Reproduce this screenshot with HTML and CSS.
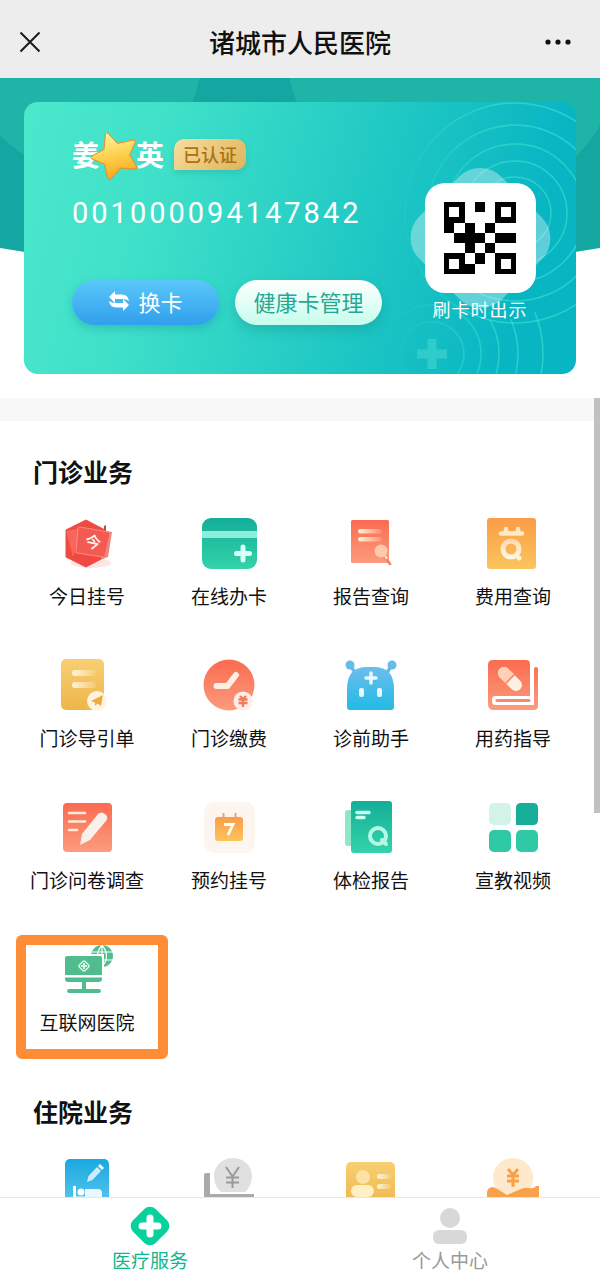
FILE: index.html
```html
<!DOCTYPE html>
<html lang="zh-CN">
<head>
    <meta charset="UTF-8">
    <meta name="viewport" content="width=device-width, initial-scale=1.0">
    <title>诸城市人民医院</title>
    <link rel="stylesheet" href="styles.css">
</head>
<body>
    <!-- shared gradients -->
    <svg class="defs" aria-hidden="true">
        <defs>
            <linearGradient id="green" x1="0" y1="0" x2="0" y2="1"><stop offset="0" stop-color="#14ae99"/><stop offset="1" stop-color="#34d3a9"/></linearGradient>
            <linearGradient id="red" x1="0" y1="0" x2="0" y2="1"><stop offset="0" stop-color="#fb6b50"/><stop offset="1" stop-color="#fb9c7d"/></linearGradient>
            <linearGradient id="orange" x1="0" y1="0" x2="0" y2="1"><stop offset="0" stop-color="#fb9c48"/><stop offset="1" stop-color="#fbc55c"/></linearGradient>
            <linearGradient id="yellow" x1="0" y1="0" x2="0" y2="1"><stop offset="0" stop-color="#f8cf72"/><stop offset="1" stop-color="#eeb54a"/></linearGradient>
            <linearGradient id="blue" x1="0" y1="0" x2="0" y2="1"><stop offset="0" stop-color="#6cbdec"/><stop offset="1" stop-color="#21bbe5"/></linearGradient>
            <linearGradient id="sky" x1="0" y1="0" x2="0" y2="1"><stop offset="0" stop-color="#18a9e0"/><stop offset="1" stop-color="#62c8ef"/></linearGradient>
            <linearGradient id="fade" x1="0" y1="0" x2="1" y2="0"><stop offset="0" stop-color="#fff3d8"/><stop offset="1" stop-color="#fff3d8" stop-opacity="0.15"/></linearGradient>
            <linearGradient id="pale" x1="0" y1="0" x2="0" y2="1"><stop offset="0" stop-color="#ffdcb0"/><stop offset="1" stop-color="#fff6e6"/></linearGradient>
            <linearGradient id="star" x1="0.4" y1="0" x2="0.6" y2="1"><stop offset="0" stop-color="#fff3a0"/><stop offset="0.5" stop-color="#fdcf4b"/><stop offset="1" stop-color="#f8a51e"/></linearGradient>
            <linearGradient id="ring" gradientUnits="userSpaceOnUse" x1="10" y1="0" x2="120" y2="0"><stop offset="0" stop-color="#3fe0d0" stop-opacity="0"/><stop offset="1" stop-color="#3fe0d0" stop-opacity="0.6"/></linearGradient>
        </defs>
    </svg>

    <header class="navbar">
        <button class="nav_btn" type="button" aria-label="关闭">
            <svg width="22" height="22" viewBox="0 0 22 22"><path d="M1.5 1.5L20.5 20.5M20.5 1.5L1.5 20.5" stroke="#1a1a1a" stroke-width="2"/></svg>
        </button>
        <h1>诸城市人民医院</h1>
        <button class="nav_btn" type="button" aria-label="更多">
            <svg width="28" height="8" viewBox="0 0 28 8" fill="#111"><circle cx="4" cy="4" r="2.6"/><circle cx="14" cy="4" r="2.6"/><circle cx="24" cy="4" r="2.6"/></svg>
        </button>
    </header>

    <section class="hero">
        <svg class="hero_bg" viewBox="0 0 600 190" preserveAspectRatio="none" aria-hidden="true">
            <clipPath id="curve"><path d="M0 0H600V170Q300 220 0 170Z"/></clipPath>
            <g clip-path="url(#curve)">
                <rect width="600" height="200" fill="#14a7a1"/>
                <circle cx="85" cy="-23" r="117" fill="#1fb4a8"/>
                <circle cx="454" cy="-38" r="169" fill="#1fb4a8"/>
            </g>
        </svg>
        <div class="card">
            <svg class="card_rings" viewBox="0 0 200 272" fill="none" stroke="url(#ring)" stroke-width="1.5" aria-hidden="true">
                <clipPath id="below"><path d="M0 190L60 200Q139 245 200 180V272H0Z"/></clipPath>
                <circle cx="139" cy="111" r="36"/><circle cx="139" cy="111" r="52"/><circle cx="139" cy="111" r="69"/><circle cx="139" cy="111" r="88"/><circle cx="139" cy="111" r="110"/>
                <g clip-path="url(#below)">
                    <circle cx="56" cy="252" r="32"/><circle cx="56" cy="252" r="49"/><circle cx="56" cy="252" r="67"/><circle cx="56" cy="252" r="86"/><circle cx="56" cy="252" r="111"/>
                </g>
                <path d="M56 237V267M41 252H71" stroke="#2fccca" stroke-width="9"/>
            </svg>
            <div class="card_info">
                <div class="person">
                    <p class="name">
                        <span>姜</span>
                        <svg class="star" viewBox="0 0 50 50" aria-hidden="true"><path d="M16.5 2.5Q17.5 1 19 2.5L28.5 12.5L44 9Q47 9 46 12L40.5 24L47.5 35Q48.5 38 45 38L31.5 37L22 48Q19.5 50 18.5 46.5L15.5 33L3 28Q.5 26.5 3 25L15 18.5Z" fill="url(#star)" stroke="#f08a22"/></svg>
                        <span>英</span>
                    </p>
                    <span class="verified">已认证</span>
                </div>
                <p class="card_no">001000094147842</p>
                <div class="card_actions">
                    <button class="pill pill_blue" type="button">
                        <svg width="22" height="20" viewBox="0 0 22 20" fill="#fff" aria-hidden="true"><path d="M1 6L7 0V3.500H14Q20 3.500 21 10Q18.500 8 14 8H7V12Z"/><path d="M21 14L15 20V16.500H8Q2 16.500 1 10Q3.500 12 8 12H15V8Z"/></svg>
                        换卡
                    </button>
                    <button class="pill pill_white" type="button">健康卡管理</button>
                </div>
            </div>
            <div class="qr">
                <div class="qr_box">
                    <svg width="72" height="72" viewBox="0 0 14 14" shape-rendering="crispEdges" role="img" aria-label="二维码">
                        <path fill-rule="evenodd" d="M0 0H4V4H0ZM1 1V3H3V1ZM10 0H14V4H10ZM11 1V3H13V1ZM0 10H4V14H0ZM1 11V13H3V11ZM10 10H14V14H10ZM11 11V13H13V11Z"/>
                        <path d="M6 0H8V2H6ZM0 4H2V6H0ZM4 4H6V6H4ZM8 4H10V6H8ZM2 6H8V8H2ZM10 6H14V8H10ZM4 8H6V10H4ZM8 8H10V10H8ZM6 10H8V12H6ZM4 12H6V14H4Z"/>
                    </svg>
                </div>
                <p>刷卡时出示</p>
            </div>
        </div>
    </section>

    <div class="scroll_wrap">
        <main class="content">
            <section class="services">
                <h2>门诊业务</h2>
                <div class="grid">
                    <a class="item" href="#">
                        <svg viewBox="0 0 56 56" aria-hidden="true"><ellipse cx="32" cy="47" rx="20" ry="5" fill="#fde5e2"/><path d="M27 4L46 14V41L27 51L7 41V14Z" fill="#ef4a42" stroke="#ef4a42" stroke-linejoin="round"/><path d="M7 15L24 12L14 41Z" fill="#fb7a6c" opacity="0.6"/><path d="M26 13L53 16L49 41L43 43Z" fill="#e98578"/><path d="M45 15V10L47 9V15Z" fill="#c9453c"/><path d="M21 11L50 16Q51 16 51 18L46 40Q46 42 44 41L18 37Q16 37 17 35L19 12Q19 11 21 11Z" fill="#f35b52" stroke="#fa8b80"/><text class="icon_text" x="34" y="32" font-size="16" transform="rotate(12 34 26)" text-anchor="middle" fill="#fff">今</text></svg>
                        <span>今日挂号</span>
                    </a>
                    <a class="item" href="#">
                        <svg viewBox="0 0 56 56" aria-hidden="true"><rect x="1" y="2" width="55" height="51" rx="9" fill="url(#green)"/><path d="M1 15H56V22H1Z" fill="#8ceed8"/><path d="M42 31V44M35.5 37.5H48.5" stroke="#d9fff8" stroke-width="5" stroke-linecap="round"/></svg>
                        <span>在线办卡</span>
                    </a>
                    <a class="item" href="#">
                        <svg viewBox="0 0 56 56" aria-hidden="true"><rect x="8" y="4" width="38" height="43" rx="1.5" fill="url(#red)"/><rect x="15" y="13" width="24" height="4.5" rx="2.2" fill="url(#fade)"/><rect x="15" y="21" width="24" height="4.5" rx="2.2" fill="url(#fade)"/><path d="M42 41L47 48" stroke="#ee8067" stroke-width="2.5" stroke-linecap="round"/><circle cx="38" cy="35" r="6.5" fill="#ffc9a8"/><path d="M42 40L44 43" stroke="#ffe2cc" stroke-width="2"/></svg>
                        <span>报告查询</span>
                    </a>
                    <a class="item" href="#">
                        <svg viewBox="0 0 56 56" aria-hidden="true"><rect x="2" y="2" width="49" height="51" rx="3" fill="url(#orange)"/><path d="M16 17.5H37M21 13V17M33 13V17" stroke="#ffe9c6" stroke-width="4.5" stroke-linecap="round"/><circle cx="26" cy="33" r="8" fill="none" stroke="url(#pale)" stroke-width="5"/><circle cx="34" cy="42" r="2.5" fill="#fff2dc"/></svg>
                        <span>费用查询</span>
                    </a>
                    <a class="item" href="#">
                        <svg viewBox="0 0 56 56" aria-hidden="true"><rect x="2" y="1" width="43" height="51" rx="5" fill="url(#yellow)"/><rect x="13" y="12" width="24" height="6" rx="3" fill="url(#fade)"/><rect x="13" y="24" width="24" height="6" rx="3" fill="url(#fade)"/><circle cx="38" cy="43" r="10" fill="#fff3df"/><path d="M32 43L44 37L42 48L38.5 45.5L36 48V44.5Z" fill="#efab3b"/></svg>
                        <span>门诊导引单</span>
                    </a>
                    <a class="item" href="#">
                        <svg viewBox="0 0 56 56" aria-hidden="true"><circle cx="28" cy="27" r="25.5" fill="url(#red)"/><path d="M15.5 28H26.5L35 17" fill="none" stroke="#fff0e6" stroke-width="6" stroke-linecap="round" stroke-linejoin="round"/><circle cx="42" cy="43" r="9.5" fill="#fdeee6"/><path d="M39 38L42 41L45 38M37.5 41.5H46.5M37.5 45H46.5M42 41V49" stroke="#f3785f" stroke-width="2.3" fill="none"/></svg>
                        <span>门诊缴费</span>
                    </a>
                    <a class="item" href="#">
                        <svg viewBox="0 0 56 56" aria-hidden="true"><path d="M7 7L13 16M49 7L43 16" stroke="#67bbea" stroke-width="3.5"/><circle cx="7" cy="7" r="4.5" fill="#67bbea"/><circle cx="49" cy="7" r="4.5" fill="#67bbea"/><path d="M4 31Q4 9 24 9H31Q51 9 51 31V49Q51 52 48 52H7Q4 52 4 49Z" fill="url(#blue)"/><path d="M28 15V25M23 20H33" stroke="#e6f7ff" stroke-width="3.5" stroke-linecap="round"/><rect x="16" y="30" width="5" height="9" rx="2" fill="#e6f7ff"/><rect x="34" y="30" width="5" height="9" rx="2" fill="#e6f7ff"/></svg>
                        <span>诊前助手</span>
                    </a>
                    <a class="item" href="#">
                        <svg viewBox="0 0 56 56" aria-hidden="true"><path d="M8 2H41Q45 2 45 6V38H10Q7 38 7 42.5Q7 47 10 47H49V11Q49 9 51 9Q53 9 53 11V48Q53 52 49 52H9Q3 52 3 46V7Q3 2 8 2Z" fill="url(#red)"/><path d="M12 42.5H44" stroke="#f58b6c" stroke-width="3" stroke-linecap="round"/><g transform="rotate(45 25 21)"><rect x="10.5" y="15" width="29" height="12" rx="6" fill="#fff0e6"/><path d="M16.5 15H24.5V27H16.5A6 6 0 0 1 16.5 15" fill="#ffd0b6"/><path d="M25 15V27" stroke="#f5795c" stroke-width="1.5"/></g></svg>
                        <span>用药指导</span>
                    </a>
                    <a class="item" href="#">
                        <svg viewBox="0 0 56 56" aria-hidden="true"><rect x="4" y="3" width="49" height="49" rx="4" fill="url(#red)"/><path d="M10 13H26M10 21.5H26M10 30H18" stroke="#ffeadd" stroke-width="2.5" stroke-linecap="round"/><path d="M21 45L23 34L39 14Q42 11 46 14Q50 17 47 21L31 40Z" fill="#f8f1ea"/></svg>
                        <span>门诊问卷调查</span>
                    </a>
                    <a class="item" href="#">
                        <svg viewBox="0 0 56 56" aria-hidden="true"><rect x="3" y="2" width="51" height="51" rx="10" fill="#fdf5ef"/><rect x="14" y="17" width="28" height="24" rx="3" fill="url(#orange)"/><path d="M22.5 13V20M34.5 13V20" stroke="#f7a05a" stroke-width="2"/><path d="M23 24.5H32L27 35" fill="none" stroke="#fff" stroke-width="2.8"/></svg>
                        <span>预约挂号</span>
                    </a>
                    <a class="item" href="#">
                        <svg viewBox="0 0 56 56" aria-hidden="true"><rect x="2" y="10" width="14" height="36" rx="3" fill="#8fe6cb"/><rect x="8" y="1" width="41" height="52" rx="3" fill="url(#green)"/><path d="M14 12.5H26M14 17.5H21" stroke="#c9fff0" stroke-width="3.5" stroke-linecap="round"/><circle cx="35" cy="36" r="8" fill="none" stroke="#b5f7e5" stroke-width="4"/><path d="M39 40L43 44" stroke="#b5f7e5" stroke-width="4" stroke-linecap="round"/></svg>
                        <span>体检报告</span>
                    </a>
                    <a class="item" href="#">
                        <svg viewBox="0 0 56 56" aria-hidden="true"><rect x="4" y="3" width="22" height="22" rx="5" fill="#d3f3e9"/><path d="M36 3H48Q53 3 53 8V20Q53 25 48 25H31V8Q31 3 36 3Z" fill="#16ae99"/><rect x="4" y="30" width="22" height="22" rx="5" fill="#30c9a6"/><rect x="31" y="30" width="22" height="22" rx="5" fill="#30c9a6"/></svg>
                        <span>宣教视频</span>
                    </a>
                    <a class="item marked" href="#">
                        <svg viewBox="0 0 56 56" aria-hidden="true"><circle cx="43" cy="14" r="11" fill="#51bd8f"/><path d="M43 3V25M32 10H54M32 18H54M43 3Q34 14 43 25M43 3Q52 14 43 25" fill="none" stroke="#fff" stroke-width="1.2"/><path d="M4 12H45V42H4Z" fill="#fff"/><path d="M8 14H41Q43 14 43 16V33H6V16Q6 14 8 14ZM6 35.5H43V37Q43 40 40 40H27V47H40Q42 47 42 49T40 51H10Q8 51 8 49T10 47H23V40H9Q6 40 6 37Z" fill="#51bd8f"/><rect x="21" y="20" width="8" height="8" rx="2" transform="rotate(45 25 24)" fill="none" stroke="#d7f7e6" stroke-width="1.5"/><path d="M25 21V27M22 24H28" stroke="#d7f7e6" stroke-width="2"/></svg>
                        <span>互联网医院</span>
                    </a>
                </div>
            </section>

            <section class="services">
                <h2>住院业务</h2>
                <div class="grid">
                    <a class="item" href="#" aria-label="住院登记">
                        <svg viewBox="0 0 56 56" aria-hidden="true"><rect x="6" y="3" width="44" height="50" rx="5" fill="url(#sky)"/><path d="M28 26L29.5 20L38 11L42 15L33.5 24Z" fill="#cbeeff"/><path d="M39 10L41 8L45 12L43 14Z" fill="#fff"/><path d="M15.5 30V46M16 42H42" stroke="#fff" stroke-width="3"/><circle cx="22" cy="36" r="3.5" fill="#fff"/><path d="M26 33H39Q43 33 43 37V43H26Z" fill="#eaf8ff"/></svg>
                    </a>
                    <a class="item" href="#" aria-label="住院预缴">
                        <svg viewBox="0 0 56 56" aria-hidden="true"><path d="M3 19Q3 17 5 17H9V38H53V46H3Z" fill="#aaa"/><path d="M20 36H44Q51 30 51 20A19 18 0 0 0 13 20Q13 30 20 36Z" fill="#e0e0e0"/><path d="M25 11L31.5 20.5L38 11M25 21.5H38M25 26.5H38M31.5 21V32" fill="none" stroke="#999" stroke-width="2"/></svg>
                    </a>
                    <a class="item" href="#" aria-label="住院信息">
                        <svg viewBox="0 0 56 56" aria-hidden="true"><rect x="3" y="6" width="49" height="46" rx="5" fill="url(#yellow)"/><circle cx="20" cy="21" r="7" fill="#fde2a4"/><rect x="8" y="29" width="23" height="12" rx="6" fill="#fff0c4"/><rect x="34" y="18" width="14" height="5" rx="2.5" fill="url(#fade)"/><rect x="34" y="28" width="14" height="5" rx="2.5" fill="url(#fade)"/></svg>
                    </a>
                    <a class="item" href="#" aria-label="住院费用">
                        <svg viewBox="0 0 56 56" aria-hidden="true"><circle cx="28" cy="22" r="20" fill="#ffe9cc"/><path d="M23 13L28 19L33 13M22 20H34M22 25H34M28 19V31" fill="none" stroke="#fba04a" stroke-width="3"/><path d="M2 37Q2 32 7 31Q10 31 14 34L22 39L36 33Q40 31 44 32Q49 33 51 30H54V50H2Z" fill="#fba04a"/></svg>
                    </a>
                </div>
            </section>
        </main>
        <div class="scroll_thumb"></div>
    </div>

    <nav class="tabbar">
        <a class="tab active" href="#">
            <svg viewBox="0 0 40 40" aria-hidden="true"><rect x="4" y="4" width="32" height="32" rx="8" transform="rotate(45 20 20)" fill="#08d19c"/><path d="M20 12V28M12 20H28" stroke="#fff" stroke-width="7" stroke-linecap="round"/></svg>
            <span>医疗服务</span>
        </a>
        <a class="tab" href="#">
            <svg viewBox="0 0 40 40" aria-hidden="true" fill="#d8d8d8"><circle cx="20" cy="12" r="10"/><rect x="3" y="24" width="34" height="14" rx="6"/></svg>
            <span>个人中心</span>
        </a>
    </nav>
</body>
</html>
```

FILE: styles.css
```css
*, *:after, *:before {
    box-sizing: border-box;
}

body {
    font-family: "Noto Sans CJK SC", sans-serif;
    margin: 0;
    height: 100vh;
    display: flex;
    flex-direction: column;
    background: white;
    color: #111;
}

h1, h2, p {
    margin: 0;
}

a {
    color: inherit;
    text-decoration: none;
}

button {
    font-family: inherit;
    border: 0;
    padding: 0;
    cursor: pointer;
}

.defs {
    position: absolute;
    width: 0;
    height: 0;
}

/* top bar */
.navbar {
    display: flex;
    justify-content: space-between;
    align-items: center;
    height: 78px;
    padding: 6px 28px 0 16px;
    background: #ededed;
    flex-shrink: 0;
}

.navbar h1 {
    font-size: 26px;
    font-weight: 500;
    line-height: 36px;
}

.nav_btn {
    display: flex;
    justify-content: center;
    align-items: center;
    width: 28px;
    height: 28px;
    background: none;
}

.nav_btn:first-child {
    margin-right: 12px;
}

/* health card */
.hero {
    position: relative;
    padding: 24px;
    flex-shrink: 0;
}

.hero_bg {
    position: absolute;
    top: 0;
    left: 0;
    width: 100%;
    height: 190px;
}

.card {
    position: relative;
    display: flex;
    justify-content: space-between;
    height: 272px;
    padding: 31px 37px 0 48px;
    border-radius: 14px;
    overflow: hidden;
    background: linear-gradient(105deg, #4be8cc 0%, #3fe0c9 25%, #22cac4 58%, #08b5c3 88%);
}

.card_rings {
    position: absolute;
    top: 0;
    right: 0;
    width: 200px;
    height: 272px;
}

.card_info {
    position: relative;
    color: white;
}

.person {
    display: flex;
    align-items: center;
    gap: 10px;
    height: 42px;
}

.name {
    position: relative;
    display: flex;
    gap: 36px;
    font-size: 28px;
    font-weight: 700;
    line-height: 38px;
}

.star {
    position: absolute;
    top: -4px;
    left: 17px;
    width: 50px;
    height: 50px;
}

.verified {
    height: 31px;
    padding: 0 9px;
    border-radius: 10px 10px 10px 0;
    background: linear-gradient(135deg, #f7dda0, #dfb35a);
    box-shadow: 0 3px 6px rgba(0, 120, 100, 0.2);
    color: #ad7210;
    font-size: 18px;
    font-weight: 500;
    line-height: 30px;
}

.card_no {
    margin-top: 18px;
    font-family: Roboto, sans-serif;
    font-size: 29px;
    letter-spacing: 3px;
    line-height: 40px;
}

.card_actions {
    display: flex;
    gap: 16px;
    margin-top: 47px;
}

.pill {
    display: flex;
    justify-content: center;
    align-items: center;
    gap: 8px;
    width: 147px;
    height: 45px;
    padding-bottom: 4px;
    border-radius: 23px;
    font-size: 22px;
    line-height: 32px;
}

.pill_blue {
    background: linear-gradient(#5ac8fa, #319fec);
    box-shadow: 0 4px 8px rgba(20, 130, 150, 0.3);
    color: white;
}

.pill_white {
    background: linear-gradient(#ffffff, #c6fdec);
    box-shadow: 0 6px 12px rgba(20, 130, 130, 0.3);
    color: #26a893;
}

.qr {
    position: relative;
    z-index: 1;
    display: flex;
    flex-direction: column;
    align-items: center;
    width: 118px;
    padding-top: 50px;
}

.qr_box {
    position: relative;
    display: flex;
    justify-content: center;
    align-items: center;
    width: 111px;
    height: 110px;
    border-radius: 20px;
    background: white;
}

.qr_box:before {
    content: "";
    position: absolute;
    z-index: -1;
    inset: -3px;
    border-radius: 30px;
    background: rgba(255, 255, 255, 0.35);
    transform: rotate(45deg);
}

.qr p {
    margin-top: 2px;
    color: white;
    font-size: 18px;
    letter-spacing: 1px;
    line-height: 28px;
    white-space: nowrap;
}

/* scrolling area */
.scroll_wrap {
    position: relative;
    flex: 1;
    min-height: 0;
}

.content {
    height: 100%;
    overflow-y: auto;
    scrollbar-width: none;
    border-top: 23px solid #f8f8f8;
}

.scroll_thumb {
    position: absolute;
    top: 0;
    right: 0;
    width: 6px;
    height: 52%;
    background: #c1c1c1;
}

.services {
    padding: 32px 16px 25px;
}

.services h2 {
    margin-bottom: 27px;
    padding-left: 17px;
    font-size: 25px;
    font-weight: 700;
    line-height: 36px;
}

.grid {
    display: grid;
    grid-template-columns: repeat(4, 1fr);
    row-gap: 48px;
}

.item {
    position: relative;
    display: flex;
    flex-direction: column;
    align-items: center;
    gap: 10px;
    font-size: 19px;
    line-height: 28px;
    white-space: nowrap;
}

.item svg {
    width: 56px;
    height: 56px;
}

.icon_text {
    font-weight: 500;
}

.marked:after {
    content: "";
    position: absolute;
    top: -7px;
    bottom: -23px;
    left: 0;
    right: -10px;
    border: 10px solid #ff8c37;
    border-radius: 6px;
}

/* bottom tabs */
.tabbar {
    display: grid;
    grid-template-columns: 1fr 1fr;
    height: 79px;
    padding-top: 8px;
    border-top: 1px solid #e6e6e6;
    background: white;
    flex-shrink: 0;
}

.tab {
    display: flex;
    flex-direction: column;
    align-items: center;
    color: #999;
    font-size: 19px;
    line-height: 28px;
}

.tab svg {
    width: 40px;
    height: 40px;
}

.tab.active {
    color: #0fb58c;
}
```
